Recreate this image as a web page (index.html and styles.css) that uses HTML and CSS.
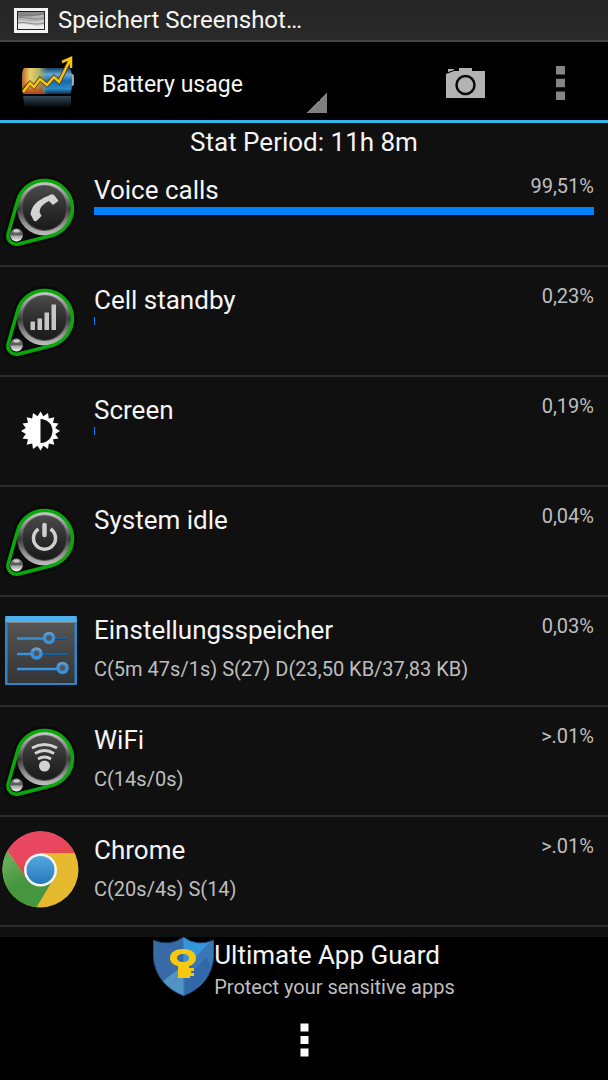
FILE: index.html
```html
<!DOCTYPE html>
<html lang="de">
<head>
  <meta charset="UTF-8">
  <meta name="viewport" content="width=device-width, initial-scale=1.0">
  <title>Battery usage</title>
  <link rel="stylesheet" href="styles.css">
</head>
<body>
  <!-- shared badge artwork -->
  <svg class="defs" width="0" height="0" aria-hidden="true">
    <defs>
      <linearGradient id="ring" x1="0" y1="0" x2="0" y2="1">
        <stop offset="0" stop-color="#cecece"/>
        <stop offset=".3" stop-color="#8a8a8a"/>
        <stop offset=".52" stop-color="#393939"/>
        <stop offset=".75" stop-color="#888"/>
        <stop offset="1" stop-color="#c0c0c0"/>
      </linearGradient>
      <linearGradient id="face" x1="0" y1="0" x2="0" y2="1">
        <stop offset="0" stop-color="#4a4a4a"/>
        <stop offset=".6" stop-color="#292929"/>
        <stop offset="1" stop-color="#1a1a1a"/>
      </linearGradient>
      <linearGradient id="ball" x1="0" y1="0" x2="0" y2="1">
        <stop offset="0" stop-color="#999"/>
        <stop offset=".45" stop-color="#555"/>
        <stop offset=".6" stop-color="#aaa"/>
        <stop offset="1" stop-color="#f4f4f4"/>
      </linearGradient>
      <symbol id="badge" viewBox="0 0 80 80">
        <path d="M17.4 31.4A28 28 0 1 1 51 65.7L18.6 74A8.5 8.5 0 0 1 8.2 63.6Z" fill="#080808" stroke="#060606" stroke-width="9" opacity=".6"/>
        <circle cx="44.5" cy="38" r="27.5" fill="url(#ring)"/>
        <circle cx="44.5" cy="38" r="23" fill="#555"/>
        <circle cx="44.5" cy="38" r="22" fill="url(#face)"/>
        <path d="M17.4 31.4A28 28 0 1 1 51 65.7L18.6 74A8.5 8.5 0 0 1 8.2 63.6Z" fill="none" stroke="#0aa80a" stroke-width="3.500"/>
        <circle cx="16.5" cy="65" r="6.5" fill="url(#ball)"/>
        <ellipse cx="16.5" cy="61" rx="3" ry="1.5" fill="#ccc"/>
      </symbol>
    </defs>
  </svg>

  <div class="status">
    <svg class="status-icon" viewBox="0 0 34 25" aria-hidden="true">
      <path d="M1.5 1.5H32.500V23.500H1.500Z" fill="#222" stroke="#f4f4f4" stroke-width="3"/>
      <path d="M4 4H30V21H4Z" fill="#888"/>
      <path d="M4 9C12 8 22 9 30 6V21H4Z" fill="#b5b5b5"/>
      <path d="M4 13C11 11 17 16 30 12V21H4Z" fill="#d0d0d0"/>
      <path d="M4 16C14 15 20 20 30 17V21H4Z" fill="#eee"/>
      <path d="M4 7Q17 9 30 6M4 10C12 8 18 13 30 10M4 15C13 13 18 18 30 15" fill="none" stroke="#777" stroke-width=".8"/>
    </svg>
    <span>Speichert Screenshot…</span>
  </div>

  <header class="topbar">
    <svg class="app-icon" viewBox="0 0 54 54" aria-hidden="true">
      <defs>
        <linearGradient id="cell" x1="0" y1="0" x2="0" y2="1">
          <stop offset="0" stop-color="#174165"/>
          <stop offset=".25" stop-color="#62a9db"/>
          <stop offset=".5" stop-color="#1769a8"/>
          <stop offset=".8" stop-color="#2b8cca"/>
          <stop offset="1" stop-color="#0b2d4b"/>
        </linearGradient>
        <linearGradient id="warm" x1="0" y1="0" x2="1" y2="0">
          <stop offset="0" stop-color="#b8661e"/>
          <stop offset=".3" stop-color="#ecd06a"/>
          <stop offset=".65" stop-color="#b5b45f"/>
          <stop offset="1" stop-color="#6f9471" stop-opacity="0"/>
        </linearGradient>
        <linearGradient id="mirror" x1="0" y1="0" x2="0" y2="1">
          <stop offset="0" stop-color="#34495a"/>
          <stop offset="1" stop-color="#000"/>
        </linearGradient>
        <linearGradient id="rust" x1="0" y1="0" x2="0" y2="1">
          <stop offset=".5" stop-color="#b63f14" stop-opacity="0"/>
          <stop offset="1" stop-color="#b63f14"/>
        </linearGradient>
      </defs>
      <path d="M48 18h2q2 0 2 3v6q0 3-2 3h-2z" fill="#aaa"/>
      <path d="M2 12h46q2 2 2 13t-2 13H2q-2-2-2-13T2 12z" fill="url(#cell)"/>
      <path d="M2 12h24v26H2Q0 36 0 25T2 12z" fill="url(#warm)"/>
      <path d="M1 12h20v26H1z" fill="url(#rust)"/>
      <path d="M1 40h48v12H3z" fill="url(#mirror)"/>
      <path d="M1 35L8 27l4 4 6-8 7 6 7-8 5 5L48 4" fill="none" stroke="#4e370b" stroke-width="4"/>
      <path d="M1 36L8 27l4 4 6-8 7 6 7-8 5 5L48 4M40 6l9-4 0 10" fill="none" stroke="#f9c515" stroke-width="2.500"/>
    </svg>
    <select class="view-select" aria-label="View">
      <option>Battery usage</option>
    </select>
    <div class="actions">
      <button class="action" type="button" aria-label="Take screenshot">
        <svg class="camera" viewBox="0 0 40 32" aria-hidden="true">
          <path d="M0 7L8 4H13V1H26V4H39V31H0Z" fill="#b3b3b3"/>
          <path d="M2 2H8V3L2 5Z" fill="#b3b3b3"/>
          <circle cx="19.500" cy="18" r="9" fill="none" stroke="#080808" stroke-width="2.500"/>
        </svg>
      </button>
      <button class="action" type="button" aria-label="More options">
        <svg class="dots" viewBox="0 0 9 34" aria-hidden="true">
          <path d="M0 0h9v8.500H0zM0 12.700h9v8.500H0zM0 25.400h9v8.500H0z" fill="#858585"/>
        </svg>
      </button>
    </div>
  </header>

  <main class="content">
    <p class="period">Stat Period: 11h 8m</p>

    <ul class="usage">
      <li class="row">
        <svg class="icon" viewBox="0 0 80 80" aria-hidden="true">
          <use href="#badge"/>
          <path d="M48 26q4-3 6-1l4 5q1 1-1 2l-4 3-4-4q-9 4-9.500 11l2 4-5 5q-2 1-3-1l-3-6Q32 32 48 26z" fill="#d3d3d3"/>
        </svg>
        <div class="info">
          <div class="line"><span class="name">Voice calls</span><span class="percent">99,51%</span></div>
          <div class="bar"><div class="fill" style="width: 100%"></div></div>
        </div>
      </li>
      <li class="row">
        <svg class="icon" viewBox="0 0 80 80" aria-hidden="true">
          <use href="#badge"/>
          <path d="M30.500 41.500h4.500V50h-4.500zM37.500 38.500h4.500V50h-4.500zM44.500 32.500h4.500V50h-4.500zM51.500 24.500h4.500V50h-4.500z" fill="#c6c6c6"/>
        </svg>
        <div class="info">
          <div class="line"><span class="name">Cell standby</span><span class="percent">0,23%</span></div>
          <div class="bar"><div class="fill" style="width: 0.23%"></div></div>
        </div>
      </li>
      <li class="row">
        <svg class="icon" viewBox="0 0 80 80" aria-hidden="true">
          <path id="sun" fill="#fff"/>
          <path d="M40.500 29A12 12 0 0 1 40.500 53Z" fill="#101010"/>
        </svg>
        <div class="info">
          <div class="line"><span class="name">Screen</span><span class="percent">0,19%</span></div>
          <div class="bar"><div class="fill" style="width: 0.19%"></div></div>
        </div>
      </li>
      <li class="row">
        <svg class="icon" viewBox="0 0 80 80" aria-hidden="true">
          <use href="#badge"/>
          <path d="M38.500 29A11 11 0 1 0 50.500 29" fill="none" stroke="#d0d0d0" stroke-width="3.500"/>
          <path d="M44.500 25V35" stroke="#d0d0d0" stroke-width="4.500" stroke-linecap="round"/>
        </svg>
        <div class="info">
          <div class="line"><span class="name">System idle</span><span class="percent">0,04%</span></div>
        </div>
      </li>
      <li class="row">
        <svg class="icon" viewBox="0 0 80 80" aria-hidden="true">
          <defs>
            <linearGradient id="panel" x1="0" y1="0" x2="0" y2="1">
              <stop offset="0" stop-color="#565656"/>
              <stop offset="1" stop-color="#343434"/>
            </linearGradient>
          </defs>
          <rect x="5" y="6" width="72" height="69" rx="1" fill="#2e86c8"/>
          <path d="M6 6h70l1 6H5z" fill="#4cb0ef"/>
          <path d="M7.500 12h67v61h-67z" fill="url(#panel)"/>
          <path d="M7.500 12.500h67" stroke="#888"/>
          <path d="M17 28.500H67M17 44H67M17 59H60" stroke="#174a77" stroke-width="3"/>
          <path d="M17 28.500H45M17 44H32M17 59H60" stroke="#3d91d5" stroke-width="2.500"/>
          <path d="M53 28H67M41 44H67" stroke="#2673ae"/>
          <g fill="#555" stroke="#3992d9" stroke-width="3.500">
            <circle cx="49" cy="28" r="4.500"/>
            <circle cx="36.500" cy="43.500" r="4.500"/>
            <circle cx="62.500" cy="58" r="4.500"/>
          </g>
          <path d="M44.500 25a5.500 5.500 0 0 1 9 0M32 40.500a5.500 5.500 0 0 1 9 0M58 55a5.500 5.500 0 0 1 9 0" fill="none" stroke="#75a1bc" stroke-width="1.500"/>
        </svg>
        <div class="info">
          <div class="line"><span class="name">Einstellungsspeicher</span><span class="percent">0,03%</span></div>
          <div class="detail">C(5m 47s/1s) S(27) D(23,50 KB/37,83 KB)</div>
        </div>
      </li>
      <li class="row">
        <svg class="icon" viewBox="0 0 80 80" aria-hidden="true">
          <use href="#badge"/>
          <circle cx="44.500" cy="46" r="5.500" fill="#d3d3d3"/>
          <path d="M38 39q6.500-4 13 0M35 33.500q9.500-6 19 0M32 28q12.500-7 25 0" fill="none" stroke="#d3d3d3" stroke-width="2.800"/>
        </svg>
        <div class="info">
          <div class="line"><span class="name">WiFi</span><span class="percent">&gt;.01%</span></div>
          <div class="detail">C(14s/0s)</div>
        </div>
      </li>
      <li class="row">
        <svg class="icon" viewBox="0 0 80 80" aria-hidden="true">
          <defs>
            <linearGradient id="red" x1="0" y1="0" x2=".5" y2="1">
              <stop offset=".5" stop-color="#ea4862"/>
              <stop offset="1" stop-color="#e64335"/>
            </linearGradient>
            <linearGradient id="green" x1="0" y1="0" x2=".5" y2="1">
              <stop offset=".2" stop-color="#65ab58"/>
              <stop offset=".6" stop-color="#46963f"/>
            </linearGradient>
            <linearGradient id="blue" x1="0" y1="0" x2="0" y2="1">
              <stop offset="0" stop-color="#56a8df"/>
              <stop offset="1" stop-color="#2778bd"/>
            </linearGradient>
          </defs>
          <circle cx="40.500" cy="39.500" r="38" fill="#e5ba2e"/>
          <path d="M7.500 20.500A38 38 0 0 0 36.500 77.300L54 48L40.500 39.500L25 46Z" fill="url(#green)"/>
          <path d="M7.500 20.500A38 38 0 0 1 74.800 23H40.500V39.500L25 46Z" fill="url(#red)"/>
          <circle cx="40.500" cy="40" r="16.500" fill="#f6f6f6"/>
          <circle cx="40.500" cy="40" r="14" fill="url(#blue)"/>
        </svg>
        <div class="info">
          <div class="line"><span class="name">Chrome</span><span class="percent">&gt;.01%</span></div>
          <div class="detail">C(20s/4s) S(14)</div>
        </div>
      </li>
    </ul>
  </main>

  <a class="ad" href="#">
    <svg class="shield" viewBox="0 0 61 60" aria-hidden="true">
      <path d="M0 3Q17 10 30.500 0Q44 10 61 3V20Q58 48 30.500 59Q3 48 0 20Z" fill="#376aa6"/>
      <path d="M30.500 0Q44 10 61 3V20Q58 48 30.500 59Z" fill="#3876b6"/>
      <path d="M30.500 0Q44 10 58 4L30.500 32Z" fill="#3497dc"/>
      <path d="M30.500 28V59Q18 54 10 44Z" fill="#4f94c4"/>
      <path d="M31.500 43L54 20L58 30Q49 50 31.500 58Z" fill="#3268a7"/>
      <path d="M0 3Q17 10 30.500 0Q44 10 61 3V20Q58 48 30.500 59Q3 48 0 20Z" fill="none" stroke="#1b3a60"/>
      <path fill-rule="evenodd" d="M30 12c7 0 13 3 13 9 0 4-3 7-7 8v2h5v3h-3v2h3v3h-4v2H25V29c-5-1-8-4-8-8 0-6 6-9 13-9zM30 17c-4 0-6 2-6 4s2 4 6 4 6-2 6-4-2-4-6-4z" fill="#f6c812"/>
    </svg>
    <span class="ad-text">
      <span class="ad-title">Ultimate App Guard</span>
      <span class="ad-sub">Protect your sensitive apps</span>
    </span>
  </a>

  <footer class="navbar">
    <button class="nav-menu" type="button" aria-label="Menu">
      <svg class="dots" viewBox="0 0 9 34" aria-hidden="true">
        <path d="M.5 .5h8v8h-8zM.5 13h8v8h-8zM.5 25.500h8v8h-8z" fill="#fff"/>
      </svg>
    </button>
  </footer>

  <script>
    // 16-pointed sun for the brightness icon
    const points = [];
    for (let i = 0; i < 32; i++) {
      const r = i % 2 ? 15 : 19.5;
      const a = i * Math.PI / 16;
      points.push((40.5 + r * Math.sin(a)).toFixed(1) + " " + (41 - r * Math.cos(a)).toFixed(1));
    }
    document.getElementById("sun").setAttribute("d", "M" + points.join("L") + "Z");
  </script>
</body>
</html>
```

FILE: styles.css
```css
* {
  box-sizing: border-box;
}

body {
  margin: 0;
  min-height: 100vh;
  display: flex;
  flex-direction: column;
  background: #000;
  color: #f5f5f5;
  font-family: Roboto, sans-serif;
  font-size: 26px;
}

svg {
  display: block;
  flex-shrink: 0;
}

.defs {
  position: absolute;
}

button {
  display: flex;
  align-items: center;
  justify-content: center;
  padding: 0;
  border: 0;
  background: none;
  cursor: pointer;
}

.status {
  display: flex;
  align-items: center;
  gap: 10px;
  height: 42px;
  padding: 0 14px;
  background: linear-gradient(#252525, #292929);
  border-bottom: 2px solid #444;
  font-size: 24px;
}

.status-icon {
  width: 34px;
  height: 25px;
}

.topbar {
  display: flex;
  align-items: center;
  height: 81px;
  padding: 4px 1px 0 22px;
  border-bottom: 3px solid #33b5e5;
}

.app-icon {
  width: 54px;
  height: 54px;
}

.view-select {
  appearance: none;
  width: 233px;
  height: 60px;
  margin-left: 18px;
  padding: 2px 8px 0;
  border: 0;
  background: linear-gradient(135deg, transparent 50%, #808080 50%) right bottom / 20px 20px no-repeat;
  color: #f5f5f5;
  font-family: inherit;
  font-size: 23px;
}

.actions {
  display: flex;
  margin-left: auto;
}

.action {
  width: 94px;
  height: 74px;
}

.camera {
  width: 40px;
  height: 32px;
}

.dots {
  width: 9px;
  height: 34px;
}

.content {
  flex: 1;
  background: #101010;
}

.period {
  margin: 0;
  height: 34px;
  line-height: 38px;
  text-align: center;
}

.usage {
  margin: 0;
  padding: 0;
  list-style: none;
}

.row {
  display: flex;
  gap: 14px;
  height: 110px;
  padding: 13px 14px 0 0;
  border-bottom: 2px solid #2c2c2c;
}

.icon {
  width: 80px;
  height: 80px;
}

.info {
  flex: 1;
  padding-top: 4px;
}

.line {
  display: flex;
  justify-content: space-between;
  line-height: 33px;
}

.percent {
  color: #bebebe;
  font-size: 20px;
  line-height: 25px;
}

.bar {
  height: 8px;
}

.fill {
  height: 100%;
  min-width: 1px;
  background: #0080ff;
}

.detail {
  margin-top: 8px;
  color: #bebebe;
  font-size: 20px;
  line-height: 28px;
}

.ad {
  display: flex;
  justify-content: center;
  height: 63px;
  color: #f5f5f5;
  text-decoration: none;
}

.shield {
  width: 61px;
  height: 60px;
}

.ad-text {
  display: flex;
  flex-direction: column;
}

.ad-title {
  line-height: 37px;
}

.ad-sub {
  color: #bebebe;
  font-size: 20px;
  line-height: 26px;
}

.navbar {
  display: flex;
  align-items: center;
  justify-content: center;
  height: 80px;
}

.nav-menu {
  width: 80px;
  height: 80px;
}
```
